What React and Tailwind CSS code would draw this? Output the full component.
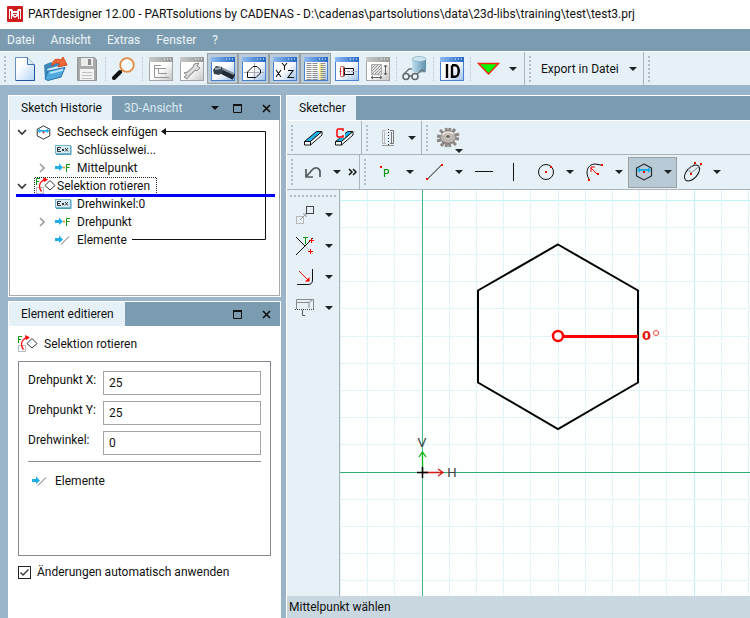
import React from "react";

function Svg({ w = 24, h = 24, children }) {
  return (
    <svg width={w} height={h} viewBox={`0 0 ${w} ${h}`} fill="none" className="block shrink-0" aria-hidden="true">
      {children}
    </svg>
  );
}

function Caret() {
  return (
    <Svg w={8} h={4}>
      <path d="M0 0H8L4 4Z" fill="#1c2326" />
    </Svg>
  );
}

function Handle() {
  return (
    <div className="flex w-[10px] shrink-0 items-center justify-center self-stretch">
      <Svg w={2} h={26}>
        <path d="M1 0V26" stroke="#b3bcc1" strokeWidth="2" strokeDasharray="2 2" />
      </Svg>
    </div>
  );
}

function Separator() {
  return (
    <div className="flex w-[6px] shrink-0 justify-center">
      <div className="h-6 border-l border-dotted border-[#bcc6cb]" />
    </div>
  );
}

function Divider() {
  return <div className="w-px shrink-0 self-stretch bg-[#aab4ba]" />;
}

function ToolButton({ label, active, children }) {
  return (
    <button
      type="button"
      aria-label={label}
      className={
        active
          ? "flex h-[31px] w-[31px] shrink-0 items-center justify-center border border-[#9a9fa2] bg-[#b9cbd7]"
          : "flex h-[31px] w-[31px] shrink-0 items-center justify-center"
      }
    >
      {children}
    </button>
  );
}

function CaretButton({ label }) {
  return (
    <button type="button" aria-label={label} className="flex h-[31px] w-[18px] shrink-0 items-center justify-center">
      <Caret />
    </button>
  );
}

function WindowIcon({ gray, children }) {
  const edge = gray ? "#a5a5a5" : "#4b7fd0";
  const id = gray ? "winGray" : "winBlue";
  return (
    <Svg>
      <defs>
        <linearGradient id={id} x1="0" y1="0" x2="1" y2="1">
          <stop offset="0.5" stopColor="#fff" />
          <stop offset="1" stopColor={gray ? "#c4c4c4" : "#9dbfec"} />
        </linearGradient>
        <linearGradient id={id + "Bar"} x1="0" y1="0" x2="1" y2="0">
          <stop offset="0" stopColor={gray ? "#c9c9c9" : "#8fbcf5"} />
          <stop offset="1" stopColor={gray ? "#999" : "#2467c4"} />
        </linearGradient>
      </defs>
      <rect x="0.5" y="0.5" width="23" height="23" fill={`url(#${id})`} stroke={edge} />
      <rect x="0" y="0" width="24" height="5" fill={`url(#${id}Bar)`} />
      <path d="M15 2h1M18 2h1M21 2h1" stroke="#fff" strokeWidth="1" />
      {children}
    </Svg>
  );
}

function LogoIcon() {
  return (
    <Svg w={16} h={16}>
      <rect width="16" height="16" rx="1" fill="#cf1c1c" />
      <path d="M2 3H5L6 5H10L11 3H14V13H11V10L8 12L5 10V13H2Z" fill="#fff" />
      <path d="M3.500 5v8M12.500 5v8M6 7.500h4M7 9.500h2" stroke="#cf1c1c" />
    </Svg>
  );
}

function NewIcon() {
  return (
    <Svg w={20} h={24}>
      <defs>
        <linearGradient id="page" x1="0" y1="0" x2="1" y2="1">
          <stop offset="0.3" stopColor="#fff" />
          <stop offset="1" stopColor="#b5d6f6" />
        </linearGradient>
      </defs>
      <path d="M0.500 0.500H12.500L19.500 7.500V23.500H0.500Z" fill="url(#page)" stroke="#6990be" />
      <path d="M12.500 0.500V7.500H19.500" fill="#d9ebfb" stroke="#3e72b3" />
      <path d="M1 23.500H19.500V8" stroke="#22569b" />
    </Svg>
  );
}

function OpenIcon() {
  return (
    <Svg w={25} h={24}>
      <path d="M1 8L8 5L10 7L17 5L19 11L5 23L2 22Z" fill="#3d87bb" />
      <path d="M4 12L19 8L20 13L8 20Z" fill="#d9effb" />
      <path d="M5 14L22 10.500L18 20L5 23.500L2 22Z" fill="#4fa9dc" stroke="#2871a9" />
      <path d="M7 16L20 12.800" stroke="#b2e3fa" strokeWidth="2" />
      <path d="M9 9C9 3 13 1 18 3L20 0L24 8L15 10L17 7C13 5 11 6 9 9Z" fill="#ee6938" stroke="#d9481d" />
    </Svg>
  );
}

function SaveIcon() {
  return (
    <Svg w={20} h={24}>
      <path d="M0.500 0.500H17.500L19.500 3V23.500H0.500Z" fill="#aaaaab" stroke="#959595" />
      <rect x="4" y="1" width="12" height="8" fill="#ececec" />
      <rect x="11" y="2" width="3" height="6" fill="#8b8b8b" />
      <rect x="3" y="12" width="14" height="11" fill="#f3f3f3" />
      <path d="M5 15.500H15M5 18.500H15M5 21.500H15" stroke="#bfbfbf" />
    </Svg>
  );
}

function SearchIcon() {
  return (
    <Svg>
      <path d="M11 12L8 15" stroke="#b27b36" strokeWidth="2" />
      <path d="M8 15L2 21" stroke="#111" strokeWidth="4" strokeLinecap="round" />
      <circle cx="15" cy="8" r="6.800" fill="#f5f8fa" stroke="#de8d45" strokeWidth="1.800" />
      <path d="M11 8C11 5 13 4 16 4" stroke="#fff" strokeWidth="2" />
    </Svg>
  );
}

function GlassesIcon() {
  return (
    <Svg w={26} h={25}>
      <defs>
        <linearGradient id="cyl" x1="0" y1="0" x2="1" y2="0">
          <stop offset="0" stopColor="#bfe0ef" />
          <stop offset="0.500" stopColor="#8eb9cf" />
          <stop offset="1" stopColor="#5f8fa9" />
        </linearGradient>
      </defs>
      <path d="M10 3V15C10 17 24 17 24 15V3Z" fill="url(#cyl)" />
      <ellipse cx="17" cy="3" rx="7" ry="2.500" fill="#cbe6f2" stroke="#86abc0" strokeWidth="0.700" />
      <path d="M2 18L7 13H10M15 18L20 14L23 16" stroke="#6e777a" strokeWidth="1.500" />
      <circle cx="4" cy="20.500" r="3" fill="#eef5f8" stroke="#60696d" strokeWidth="1.600" />
      <circle cx="13" cy="20.500" r="3" fill="#eef5f8" stroke="#60696d" strokeWidth="1.600" />
      <path d="M7 20H10" stroke="#60696d" strokeWidth="1.600" />
    </Svg>
  );
}

function EraserIcon({ complete }) {
  return (
    <Svg w={20} h={20}>
      <path d="M1.500 13.500L13.500 3.500H19L7.500 13.500Z" fill="#1eb1e8" stroke="#111" />
      <path d="M1.500 13.500H7.500V17H1.500Z" fill="#fff" stroke="#111" />
      <path d="M7.500 17V13.500L19 3.500V7Z" fill="#fff" stroke="#111" />
      {complete && (
        <>
          <path d="M1 0H11V10H5L1 13Z" fill="#e5f1f7" />
          <path d="M9 3V1H4L3 2V8L4 9H9V7" stroke="#f00" strokeWidth="1.500" />
        </>
      )}
    </Svg>
  );
}

function MirrorIcon() {
  return (
    <Svg w={14} h={18}>
      <path d="M5 1.500H1.500V14.500H5M3.500 3V14.500" stroke="#b7b7b7" />
      <path d="M9 1.500H12.500V14.500H9M10.500 3V14.500" stroke="#777" />
      <path d="M7.500 0V17" stroke="#222" strokeDasharray="1 2" />
      <path d="M1 16.500H13" stroke="#999" />
    </Svg>
  );
}

function GearIcon() {
  return (
    <Svg w={24} h={22}>
      <g stroke="#8d8784" strokeWidth="3">
        <path d="M10 1L14 20M14 1L10 20M1 9L23 12M1 14L23 7M4 3L20 18M5 19L19 2" />
      </g>
      <ellipse cx="12" cy="10.500" rx="7.500" ry="6.500" fill="#bdb5b0" stroke="#95908c" />
      <path d="M6.500 8C8 5 15 4 17.500 7" stroke="#eee9e5" strokeWidth="1.500" />
      <ellipse cx="12" cy="9.500" rx="2.500" ry="2" fill="#68645f" stroke="#ded7d2" />
      <path d="M6 14C9 17 15 17 18 14" stroke="#77716e" />
    </Svg>
  );
}

function UndoIcon() {
  return (
    <Svg w={18} h={14}>
      <path d="M2 4V12H9M2 12L8 5C11 1 16 3 16 7V12" stroke="#555b5e" strokeWidth="1.700" />
    </Svg>
  );
}

function PointIcon() {
  return (
    <Svg w={16} h={18}>
      <rect x="2" y="3" width="2" height="2" fill="#f00" />
      <path d="M6.500 14V6.500H9.500L10.500 7.500V9.500L9.500 10.500H7" stroke="#0a970e" strokeWidth="1.200" />
    </Svg>
  );
}

function LineIcon() {
  return (
    <Svg w={18} h={18}>
      <path d="M1.500 16L15.500 2" stroke="#111" />
      <path d="M0 15H2V17H0ZM15 1H17V3H15Z" fill="#f00" />
    </Svg>
  );
}

function CircleIcon() {
  return (
    <Svg w={18} h={18}>
      <circle cx="9" cy="9" r="7.500" stroke="#111" />
      <path d="M8 8H10V10H8ZM13 3H15V5H13Z" fill="#f00" />
    </Svg>
  );
}

function ArcIcon() {
  return (
    <Svg w={18} h={20}>
      <path d="M3 17C-1 11 1 2 9 2L15 3" stroke="#111" />
      <path d="M11.500 12.500L5 6M5 10V5H9" stroke="#f00" />
      <path d="M2 17H4V19H2ZM15 2H17V4H15ZM11 11H13V13H11Z" fill="#f00" />
    </Svg>
  );
}

function HexIcon({ small }) {
  return (
    <svg width={small ? 15 : 18} height={small ? 15 : 18} viewBox="0 0 18 18" fill="none" className="block shrink-0" aria-hidden="true">
      <path d="M9 1L16.500 5V13L9 17L1.500 13V5Z" stroke="#222" strokeWidth="1.100" />
      <path d="M2 7L5 4V6H13V4L16 7L13 10V8H5V10Z" fill="#20aee8" />
      <rect x="8" y="8" width="2" height="2" fill="#f00" />
    </svg>
  );
}

function EllipseIcon() {
  return (
    <Svg w={20} h={22}>
      <ellipse cx="9" cy="12" rx="5.500" ry="9.500" transform="rotate(42 9 12)" stroke="#111" />
      <path d="M8 12L5 8L13 2M8 12L19 3" stroke="#888" />
      <path d="M7 12H9V14H7ZM11 1H13V3H11ZM17 2H19V4H17Z" fill="#f00" />
    </Svg>
  );
}

function MoveIcon() {
  return (
    <Svg w={20} h={20}>
      <rect x="1.500" y="11.500" width="7" height="7" stroke="#b9b9b9" />
      <rect x="11.500" y="1.500" width="7" height="7" stroke="#444" />
      <path d="M5 15L11 9M8 9H11V12" stroke="#999" />
    </Svg>
  );
}

function TrimIcon() {
  return (
    <Svg w={20} h={20}>
      <path d="M1 1L10 10M1 19L18 2" stroke="#111" />
      <path d="M10 10L18 18" stroke="#bbb" />
      <path d="M8 1.500H13M10.500 1.500V8" stroke="#0a970e" />
      <path d="M14 4.500H19M16.500 2V7M13 15.500H18M15.500 13V18" stroke="#f00" />
    </Svg>
  );
}

function FilletIcon() {
  return (
    <Svg w={20} h={20}>
      <path d="M2 17.500H13C16 17.500 17.500 16 17.500 13V2" stroke="#111" />
      <path d="M4 4L14 14" stroke="#f00" />
      <path d="M14.500 10V14.500H10Z" fill="#f00" />
    </Svg>
  );
}

function DimensionIcon() {
  return (
    <Svg w={20} h={20}>
      <path d="M1.500 11V1.500H18.500V11M2 4.500H14V10M14 4.500L18 1.500" stroke="#8a8a8a" />
      <path d="M0 11.500H20" stroke="#444" strokeDasharray="1 1" />
      <path d="M7.500 12V17.500H10" stroke="#555" />
    </Svg>
  );
}

function RotateIcon() {
  return (
    <Svg w={20} h={18}>
      <path d="M0.500 8V1.500H4M1 4.500H3" stroke="#0a970e" />
      <rect x="0.500" y="10.500" width="7" height="6" stroke="#bdbdbd" />
      <path d="M5.500 14.500C2.500 11 2.500 6 8 2.500" stroke="#f00" strokeWidth="1.200" />
      <path d="M7 0L12 2.500L8 5Z" fill="#f00" />
      <path d="M14 3.500L19 8.500L14 13L9 8.500Z" fill="#fff" stroke="#333" />
    </Svg>
  );
}

function ExpressionIcon() {
  return (
    <Svg w={17} h={10}>
      <rect x="0.500" y="0.500" width="15" height="8" fill="#d6edf5" stroke="#79b5cc" />
      <path d="M16 1V9.500H1" stroke="#4a9dbc" />
      <path d="M6 2.500H2.500V6.500H6M2.500 4.500H5M7 4L9 6M9 4L7 6M10 3L13 6.500M13 3L10 6.500" stroke="#333" />
    </Svg>
  );
}

function ArrowIcon({ kind }) {
  return (
    <Svg w={17} h={10}>
      <path d="M0 3H4V0.500L8 4.500L4 8V6H0Z" fill="#20aee8" />
      {kind === "line" ? (
        <path d="M6 9.500L14 1.500" stroke="#666" />
      ) : (
        <>
          <path d="M8 3.500H10V5.500H8Z" fill="#f29a2e" />
          <path d="M11.500 9V1.500H15M12 4.500H14.500" stroke="#0a970e" />
        </>
      )}
    </Svg>
  );
}

function Chevron({ open }) {
  return (
    <Svg w={10} h={10}>
      {open ? (
        <path d="M1 3L5 7L9 3" stroke="#333" strokeWidth="1.600" />
      ) : (
        <path d="M3 1L7 5L3 9" stroke="#999" strokeWidth="1.600" />
      )}
    </Svg>
  );
}

function PanelButtons({ menu }) {
  return (
    <div className="ml-auto flex items-center pr-[3px]">
      {menu && (
        <button type="button" aria-label="Menü" className="flex w-[22px] justify-center">
          <Svg w={8} h={4}><path d="M0 0H8L4 4Z" fill="#111" /></Svg>
        </button>
      )}
      <button type="button" aria-label="Maximieren" className="flex w-[22px] justify-center">
        <Svg w={9} h={9}><path d="M0.500 1H8.500V8.500H0.500Z" stroke="#111" /><path d="M0 1H9" stroke="#111" strokeWidth="2" /></Svg>
      </button>
      <button type="button" aria-label="Schließen" className="ml-[7px] flex w-[22px] justify-center">
        <Svg w={9} h={9}><path d="M1 1L8 8M8 1L1 8" stroke="#111" strokeWidth="1.700" /></Svg>
      </button>
    </div>
  );
}

function MainToolbar() {
  return (
    <div className="flex h-[34px] shrink-0 items-center overflow-hidden border-t border-white bg-[#e5f1f7]">
      <div className="flex w-[9px] shrink-0 self-stretch"><Handle /></div>
      <ToolButton label="Neu"><NewIcon /></ToolButton>
      <ToolButton label="Öffnen"><OpenIcon /></ToolButton>
      <ToolButton label="Speichern"><SaveIcon /></ToolButton>
      <Separator />
      <ToolButton label="Suchen"><SearchIcon /></ToolButton>
      <Separator />
      <ToolButton label="Struktur">
        <WindowIcon gray>
          <path d="M5.500 8V20.500H20M6 11.500H17M9.500 11.500V16.500H18M5 8.500H12" stroke="#979797" />
        </WindowIcon>
      </ToolButton>
      <ToolButton label="Einstellungen">
        <WindowIcon gray>
          <path d="M7 18L16 10" stroke="#8b8b8b" strokeWidth="5" />
          <path d="M4 16L7 15L10 18L7 22L4 20L7 18ZM14 7L19 6L17 9L20 11L17 14L13 11Z" fill="#ddd" stroke="#8b8b8b" />
          <path d="M7 18L16 10" stroke="#e0e0e0" strokeWidth="3" />
        </WindowIcon>
      </ToolButton>
      <ToolButton label="3D-Ansicht" active>
        <WindowIcon>
          <path d="M9 13L23 20" stroke="#1f2932" strokeWidth="6" />
          <path d="M10 11L23 17" stroke="#8a99a6" strokeWidth="2" />
          <path d="M2 13L5 9L11 10L12 15L8 18L3 17Z" fill="#35414b" />
          <path d="M4 12L10 11" stroke="#9babb6" strokeWidth="2" />
        </WindowIcon>
      </ToolButton>
      <ToolButton label="Skizze" active>
        <WindowIcon>
          <path d="M2 15.500H22M12.500 6V23" stroke="#aaa" />
          <path d="M5.500 20.500V15L11 9.500H15L18.500 13V16L14 20.500Z" stroke="#111" />
        </WindowIcon>
      </ToolButton>
      <ToolButton label="Variablen" active>
        <WindowIcon>
          <path d="M3 13L8 20M8 13L3 20M9 6L11.500 9L14 6M11.500 9V13M15 13.500H20L15 20.500H21" stroke="#111" strokeWidth="1.100" />
        </WindowIcon>
      </ToolButton>
      <ToolButton label="Tabelle" active>
        <WindowIcon>
          <path d="M15 6H19V23H15Z" fill="#f7ed9a" />
          <path d="M5 6V23M11 6V23M19 6V23" stroke="#8c8c8c" strokeWidth="5" strokeDasharray="1 1" />
        </WindowIcon>
      </ToolButton>
      <ToolButton label="Schraube">
        <WindowIcon>
          <path d="M9.500 11.500H18.500V17.500H9.500Z" stroke="#111" />
          <path d="M4 14.500H22" stroke="#aaa" strokeDasharray="3 1" />
          <path d="M9 9.500V19.500" stroke="#111" />
          <rect x="5.500" y="9.500" width="3" height="10" rx="1" stroke="#d63b32" />
        </WindowIcon>
      </ToolButton>
      <ToolButton label="Abmessungen">
        <WindowIcon gray>
          <path d="M5.500 7.500H15.500V17.500H5.500Z" fill="#e2e2e2" stroke="#aaa" />
          <path d="M6 11L9 8M6 14L12 8M6 17L15 8M9 17L15 11M12 17L15 14" stroke="#999" />
          <path d="M5 20.500H16M19.500 8V18M7 19L5 20.500L7 22M14 19L16 20.500L14 22M18 10L19.500 8L21 10M18 16L19.500 18L21 16" stroke="#666" />
        </WindowIcon>
      </ToolButton>
      <Separator />
      <ToolButton label="Vorschau"><GlassesIcon /></ToolButton>
      <Separator />
      <ToolButton label="ID">
        <WindowIcon>
          <path d="M7 7V21M12 8.200V19.800H15C20 19.800 20 8.200 15 8.200H12" stroke="#000" strokeWidth="2.400" />
        </WindowIcon>
      </ToolButton>
      <Separator />
      <ToolButton label="Status">
        <Svg w={23} h={14}><path d="M1.500 1.500H21.500L11.500 12Z" fill="#0f0" stroke="#ee2a10" strokeWidth="1.500" /></Svg>
      </ToolButton>
      <CaretButton label="Statusmenü" />
      <div className="w-[2px] shrink-0" />
      <Divider />
      <Handle />
      <button type="button" className="flex h-[31px] w-[108px] shrink-0 items-center justify-between px-[6px]">
        Export in Datei
        <Caret />
      </button>
      <Divider />
      <Handle />
    </div>
  );
}

function TreeRow({ level = 0, chevron, icon, children }) {
  return (
    <li className={level ? "flex h-[18px] items-center pl-[27px]" : "flex h-[18px] items-center pl-[7px]"}>
      <span className="w-[10px] shrink-0">{chevron && <Chevron open={chevron === "open"} />}</span>
      <span className={level ? "ml-2 w-[22px] shrink-0" : "ml-[9px] w-[21px] shrink-0"}>{icon}</span>
      <span>{children}</span>
    </li>
  );
}

function HistoryPanel() {
  return (
    <section className="flex h-[202px] shrink-0 flex-col border border-white bg-white">
      <div className="flex h-6 shrink-0 bg-[#7b9cb0]">
        <button type="button" className="w-[103px] bg-[#e5f1f7] pl-3 text-left">Sketch Historie</button>
        <button type="button" className="w-[84px] pl-3 text-left text-[#d9e9f2]">3D-Ansicht</button>
        <PanelButtons menu />
      </div>
      <div className="relative flex-1 border border-t-0 border-[#a9a9a9] pt-[3px]">
        <ul>
          <TreeRow chevron="open" icon={<HexIcon small />}>Sechseck einfügen</TreeRow>
          <TreeRow level={1} icon={<ExpressionIcon />}>Schlüsselwei...</TreeRow>
          <TreeRow level={1} chevron="closed" icon={<ArrowIcon />}>Mittelpunkt</TreeRow>
          <TreeRow chevron="open" icon={<RotateIcon />}>Selektion rotieren</TreeRow>
          <TreeRow level={1} icon={<ExpressionIcon />}>Drehwinkel:0</TreeRow>
          <TreeRow level={1} chevron="closed" icon={<ArrowIcon />}>Drehpunkt</TreeRow>
          <TreeRow level={1} icon={<ArrowIcon kind="line" />}>Elemente</TreeRow>
        </ul>
        <svg width="269" height="170" viewBox="0 0 269 170" fill="none" className="pointer-events-none absolute top-0 left-0" aria-hidden="true">
          <path d="M24.500 75V57.500H146.500V75" stroke="#222" strokeDasharray="1 1" />
          <path d="M122 119.500H255.500V11.500H153" stroke="#111" />
          <path d="M151 11.500L156 8V15Z" fill="#111" />
          <path d="M6 75.500H265" stroke="#0000fa" strokeWidth="3" />
        </svg>
      </div>
    </section>
  );
}

function Field({ id, label, value }) {
  return (
    <div className="flex h-6">
      <label htmlFor={id} className="w-[75px] shrink-0">{label}</label>
      <input id={id} type="text" defaultValue={value} className="h-6 min-w-0 flex-1 border border-[#a5a5a5] bg-white px-[5px] outline-none" />
    </div>
  );
}

function EditPanel() {
  return (
    <section className="flex min-h-0 flex-1 flex-col border border-b-0 border-white bg-white">
      <div className="flex h-6 shrink-0 bg-[#7b9cb0]">
        <button type="button" className="w-[116px] bg-[#e5f1f7] pl-3 text-left">Element editieren</button>
        <PanelButtons />
      </div>
      <div className="px-[9px]">
        <h2 className="flex h-[35px] items-center gap-[6px]">
          <RotateIcon />
          Selektion rotieren
        </h2>
        <div className="flex h-[195px] flex-col gap-[6px] border border-[#85898f] px-[9px] py-[9px]">
          <Field id="px" label="Drehpunkt X:" value="25" />
          <Field id="py" label="Drehpunkt Y:" value="25" />
          <Field id="angle" label="Drehwinkel:" value="0" />
          <div className="flex items-center gap-[6px] border-t border-[#8f8f8f] py-[10px] pl-1">
            <ArrowIcon kind="line" />
            Elemente
          </div>
        </div>
        <label className="mt-[7px] flex items-center gap-[6px]">
          <span className="relative block h-[13px] w-[13px] shrink-0">
            <input type="checkbox" defaultChecked className="peer block h-[13px] w-[13px] appearance-none border border-[#222] bg-white" />
            <svg width="13" height="13" viewBox="0 0 13 13" fill="none" className="pointer-events-none invisible absolute inset-0 peer-checked:visible" aria-hidden="true">
              <path d="M2.500 6.500L5 9L10.500 3.500" stroke="#333" strokeWidth="1.300" />
            </svg>
          </span>
          Änderungen automatisch anwenden
        </label>
      </div>
    </section>
  );
}

const UNIT = 27.2;
const ORIGIN = { x: 82.5, y: 282.5 };

function DrawingCanvas() {
  const columns = Array.from({ length: 60 }, (_, i) => i - 3);
  const rows = Array.from({ length: 60 }, (_, i) => i - 40);
  return (
    <svg width="100%" height="100%" className="block" fill="none" role="img" aria-label="Skizze">
      {columns.map((i) => {
        const x = Math.round(ORIGIN.x + i * UNIT) - 0.5;
        return (
          <line key={i} x1={x} x2={x} y1="0" y2="100%" stroke={i % 10 === 0 ? "#c2eef9" : "#def2f8"} strokeDasharray={i % 10 === 0 ? undefined : "7 1 3 1"} />
        );
      })}
      {rows.map((i) => {
        const y = Math.round(ORIGIN.y + i * UNIT) - 0.5;
        return (
          <line key={i} y1={y} y2={y} x1="0" x2="100%" stroke={i % 10 === 0 ? "#c2f3fa" : "#def2f8"} strokeDasharray={i % 10 === 0 ? undefined : "7 1 3 1"} />
        );
      })}
      <line x1="82.500" x2="82.500" y1="0" y2="100%" stroke="#43b585" />
      <line x1="0" x2="100%" y1="282.500" y2="282.500" stroke="#2fae74" />
      <path d="M218 54.500L298 100.500V192.500L218 239L138 192.500V100.500Z" stroke="#000" strokeWidth="2" />
      <path d="M224 146.500H298" stroke="#f00" strokeWidth="3" />
      <circle cx="218" cy="146" r="5" fill="#fff" stroke="#f00" strokeWidth="2.500" />
      <text x="302" y="150" fill="#e3160b" fontSize="13" fontWeight="700" fontFamily="'DejaVu Sans', sans-serif">0</text>
      <circle cx="316" cy="143" r="2.500" stroke="#e8493f" />
      <path d="M82.500 282V263M79 267L82.500 262L86 267" stroke="#08b51c" strokeWidth="1.300" />
      <path d="M83 282.500H102M98 279L103 282.500L98 286" stroke="#d01c16" strokeWidth="1.300" />
      <path d="M77 282.500H88M82.500 277V288" stroke="#000" strokeWidth="1.500" />
      <text x="82" y="257" textAnchor="middle" fill="#444" fontSize="13" fontFamily="'DejaVu Sans', sans-serif">V</text>
      <text x="112" y="287" textAnchor="middle" fill="#444" fontSize="13" fontFamily="'DejaVu Sans', sans-serif">H</text>
    </svg>
  );
}

function SketcherPanel() {
  return (
    <main className="flex min-w-0 flex-1 flex-col border-t border-l border-white">
      <div className="flex h-6 shrink-0 bg-[#7b9cb0]">
        <button type="button" className="w-[69px] bg-[#e5f1f7] pl-3 text-left">Sketcher</button>
      </div>
      <div className="flex h-[35px] shrink-0 items-center overflow-hidden border-t border-b border-t-white border-b-[#aab4ba] bg-[#e5f1f7]">
        <Handle />
        <ToolButton label="Löschen"><EraserIcon /></ToolButton>
        <ToolButton label="Alles löschen"><EraserIcon complete /></ToolButton>
        <div className="w-[2px] shrink-0" />
        <Divider />
        <Handle />
        <ToolButton label="Spiegeln"><MirrorIcon /></ToolButton>
        <CaretButton label="Spiegeloptionen" />
        <Divider />
        <Handle />
        <button type="button" aria-label="Optionen" className="relative flex h-[31px] w-[31px] shrink-0 items-center justify-center">
          <GearIcon />
          <span className="absolute right-0 bottom-0"><Caret /></span>
        </button>
      </div>
      <div className="flex h-[35px] shrink-0 items-center overflow-hidden border-b border-[#aab4ba] bg-[#e5f1f7]">
        <Handle />
        <ToolButton label="Rückgängig"><UndoIcon /></ToolButton>
        <CaretButton label="Rückgängig-Liste" />
        <button type="button" aria-label="Mehr" className="flex h-[31px] w-[13px] shrink-0 items-center justify-center">
          <Svg w={9} h={8}><path d="M1 1L4 4L1 7M5 1L8 4L5 7" stroke="#111" strokeWidth="1.500" /></Svg>
        </button>
        <Divider />
        <Handle />
        <ToolButton label="Punkt"><PointIcon /></ToolButton>
        <CaretButton label="Punktoptionen" />
        <ToolButton label="Linie"><LineIcon /></ToolButton>
        <CaretButton label="Linienoptionen" />
        <ToolButton label="Horizontale Linie"><Svg w={18} h={18}><path d="M0 8.500H18" stroke="#111" /></Svg></ToolButton>
        <ToolButton label="Vertikale Linie"><Svg w={18} h={18}><path d="M7.500 0V18" stroke="#111" /></Svg></ToolButton>
        <ToolButton label="Kreis"><CircleIcon /></ToolButton>
        <CaretButton label="Kreisoptionen" />
        <ToolButton label="Bogen"><ArcIcon /></ToolButton>
        <CaretButton label="Bogenoptionen" />
        <div className="flex h-[31px] shrink-0 items-center bg-[#b7cad6] outline outline-1 -outline-offset-1 outline-[#9a9fa2]">
          <ToolButton label="Sechseck"><HexIcon /></ToolButton>
          <CaretButton label="Vieleckoptionen" />
        </div>
        <ToolButton label="Ellipse"><EllipseIcon /></ToolButton>
        <CaretButton label="Ellipsenoptionen" />
      </div>
      <div className="flex min-h-0 flex-1">
        <div className="w-[53px] shrink-0 border-r border-[#aab4ba] bg-[#e5f1f7] pt-[5px] pl-[2px]">
          <Svg w={48} h={4}><path d="M1 1H48" stroke="#b3bcc1" strokeWidth="2" strokeDasharray="2 2" /></Svg>
          <div className="flex"><ToolButton label="Verschieben"><MoveIcon /></ToolButton><CaretButton label="Verschiebeoptionen" /></div>
          <div className="flex"><ToolButton label="Trimmen"><TrimIcon /></ToolButton><CaretButton label="Trimmoptionen" /></div>
          <div className="flex"><ToolButton label="Verrunden"><FilletIcon /></ToolButton><CaretButton label="Verrundungsoptionen" /></div>
          <div className="flex"><ToolButton label="Bemaßen"><DimensionIcon /></ToolButton><CaretButton label="Bemaßungsoptionen" /></div>
        </div>
        <div className="min-w-0 flex-1 overflow-hidden bg-[#fdfefe]"><DrawingCanvas /></div>
      </div>
      <footer className="h-[22px] shrink-0 bg-[#c9d8e0] px-[2px] leading-[22px]">Mittelpunkt wählen</footer>
    </main>
  );
}

export default function App() {
  return (
    <div className="flex h-screen flex-col overflow-hidden bg-[#9ab4ca] font-['Roboto','Noto_Sans',sans-serif] text-[12px] leading-[18px] whitespace-nowrap text-[#111]">
      <header className="flex h-[29px] shrink-0 items-center gap-[5px] bg-white px-[7px] pb-[2px]">
        <LogoIcon />
        <h1>PARTdesigner 12.00 - PARTsolutions by CADENAS - D:\cadenas\partsolutions\data\23d-libs\training\test\test3.prj</h1>
      </header>
      <nav className="flex h-[22px] shrink-0 items-center gap-4 bg-[#7b9cb0] px-[7px] text-[#edf5f9]">
        <button type="button">Datei</button>
        <button type="button">Ansicht</button>
        <button type="button">Extras</button>
        <button type="button">Fenster</button>
        <button type="button">?</button>
      </nav>
      <MainToolbar />
      <div className="flex min-h-0 flex-1 gap-[5px] pt-[10px] pl-2">
        <aside className="flex w-[273px] shrink-0 flex-col gap-1">
          <HistoryPanel />
          <EditPanel />
        </aside>
        <SketcherPanel />
      </div>
    </div>
  );
}
